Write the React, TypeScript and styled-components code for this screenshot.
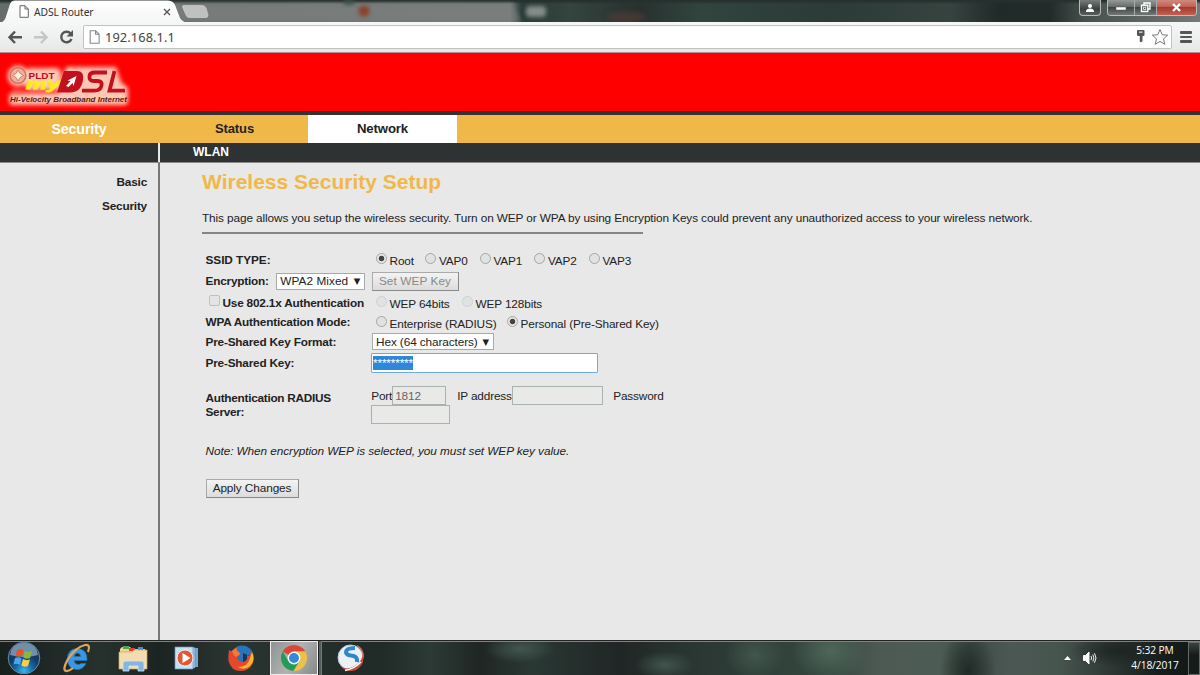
import React from "react";
import styled, { createGlobalStyle } from "styled-components";

const App = () => {
    return <Screen>
        <GlobalStyle/>
        <TabStrip>
            <TabShapes/>
            <TabTitle>
                <PageIcon size={12} color={"#666"}/>
                <span>ADSL Router</span>
                <CloseMark/>
            </TabTitle>
            <WindowButtons>
                <UserButton>
                    <svg width="10" height="10" viewBox="0 0 10 10"><circle cx="5" cy="3" r="2" fill="#fff"/><path d="M1 9V7.5Q2 5.6 5 5.6T9 7.5V9Z" fill="#fff"/></svg>
                </UserButton>
                <ButtonGroup>
                    <WinButton $w={26}><svg width="12" height="8"><rect x="1" y="3" width="10" height="3" fill="#fff" stroke="#555" strokeWidth=".5"/></svg></WinButton>
                    <WinButton $w={22}>
                        <svg width="12" height="11" fill="none" stroke="#fff" strokeWidth="1.4"><path d="M4 3V1H10V7H8"/><rect x="1.5" y="3.2" width="6.3" height="6.3"/><rect x="3.6" y="5.2" width="2.2" height="2.2" strokeWidth=".8"/></svg>
                    </WinButton>
                    <WinButton $w={40} $close>
                        <svg width="11" height="9"><path d="M2 1L9 8M9 1L2 8" stroke="#fff" strokeWidth="2.4"/></svg>
                    </WinButton>
                </ButtonGroup>
            </WindowButtons>
        </TabStrip>
        <Toolbar>
            <NavIcons/>
            <AddressBar>
                <PageIcon size={13} color={"#888"}/>
                <span>192.168.1.1</span>
                <AddressIcons/>
            </AddressBar>
            <MenuIcon><i/><i/><i/></MenuIcon>
        </Toolbar>

        <Banner><Logo/></Banner>
        <MainTabs>
            <MainTab $w={158} $color="#fff" $size={14.2} $ls={-0.1}>Security</MainTab>
            <MainTab $w={153} $size={13} $ls={-0.1}>Status</MainTab>
            <MainTab $w={149} $size={13.2} $ls={-0.15} $active>Network</MainTab>
        </MainTabs>
        <SubTabs>
            <SubLeft/>
            <SubItem>WLAN</SubItem>
        </SubTabs>

        <PageBody>
            <SideMenu>
                <SideLink>Basic</SideLink>
                <SideLink>Security</SideLink>
            </SideMenu>
            <Content>
                <Heading>Wireless Security Setup</Heading>
                <Intro>This page allows you setup the wireless security. Turn on WEP or WPA by using Encryption Keys could prevent any unauthorized access to your wireless network.</Intro>
                <Rule/>
                <Form>
                    <Row $h={21}>
                        <Label $ls={-0.05}>SSID TYPE:</Label>
                        <Options>
                            <Option $w={49.5}><Radio $on/>Root</Option>
                            <Option $w={54.5}><Radio/>VAP0</Option>
                            <Option $w={54.5}><Radio/>VAP1</Option>
                            <Option $w={54.5}><Radio/>VAP2</Option>
                            <Option $w={60}><Radio/>VAP3</Option>
                        </Options>
                    </Row>
                    <Row $h={22}>
                        <Label>Encryption:<Select $w={89} $gap={7}>WPA2 Mixed<b>▼</b></Select></Label>
                        <Button $w={87} $disabled>Set WEP Key</Button>
                    </Row>
                    <Row $h={21}>
                        <Label $check><Checkbox/>Use 802.1x Authentication</Label>
                        <Options>
                            <Option $w={86}><Radio $faded/>WEP 64bits</Option>
                            <Option $w={90}><Radio $faded/>WEP 128bits</Option>
                        </Options>
                    </Row>
                    <Row $h={18}>
                        <Label>WPA Authentication Mode:</Label>
                        <Options $down>
                            <Option $w={131}><Radio/>Enterprise (RADIUS)</Option>
                            <Option $w={160}><Radio $on/>Personal (Pre-Shared Key)</Option>
                        </Options>
                    </Row>
                    <Row $h={21}>
                        <Label>Pre-Shared Key Format:</Label>
                        <Select $w={122}>Hex (64 characters)<b>▼</b></Select>
                    </Row>
                    <Row $h={22}>
                        <Label>Pre-Shared Key:</Label>
                        <KeyInput><span>*********</span></KeyInput>
                    </Row>
                    <RadiusRow>
                        <RadiusLabel>Authentication RADIUS<br/>Server:</RadiusLabel>
                        <RadiusFields>
                            <FieldLine>
                                <FieldText $w={21}>Port</FieldText>
                                <Field $w={54}>1812</Field>
                                <FieldText $w={66} $indent={11}>IP address</FieldText>
                                <Field $w={91}/>
                                <FieldText $w={61} $indent={10}>Password</FieldText>
                            </FieldLine>
                            <Field $w={79}/>
                        </RadiusFields>
                    </RadiusRow>
                    <Note>Note: When encryption WEP is selected, you must set WEP key value.</Note>
                    <Button $w={93}>Apply Changes</Button>
                </Form>
            </Content>
        </PageBody>

        <Taskbar>
            <TaskSlot $w={48}><StartOrb/></TaskSlot>
            <TaskSlot $w={58}><ExplorerE/></TaskSlot>
            <TaskSlot $w={54}><Folder/></TaskSlot>
            <TaskSlot $w={52}><MediaPlayer/></TaskSlot>
            <TaskSlot $w={58}><Firefox/></TaskSlot>
            <ActiveSlot><ChromeLogo/></ActiveSlot>
            <StackEdge/>
            <TaskSlot $w={57}><Swirl/></TaskSlot>
            <Tray>
                <svg width="7" height="4"><path d="M0 4L3.5 0L7 4Z" fill="#fff"/></svg>
                <Speaker/>
                <Clock><span>5:32 PM</span><span>4/18/2017</span></Clock>
                <ShowDesktop/>
            </Tray>
        </Taskbar>
    </Screen>
}

export default App;

const PageIcon = ({size, color}: { size: number, color: string }) =>
    <svg width={size} height={size + 1} viewBox="0 0 12 13" fill="#fff" stroke={color} strokeWidth="1">
        <path d="M2 .7H7L10.3 4V12.3H2Z"/><path d="M7 .7V4H10.3" fill="none"/>
    </svg>

const CloseMark = () =>
    <svg width="8" height="8" viewBox="0 0 8 8"><path d="M1 1L7 7M7 1L1 7" stroke="#555" strokeWidth="1.3"/></svg>

const TabShapes = () =>
    <StripArt width="720" height="22" viewBox="0 0 720 22">
        <defs>
            <filter id="soft" x="-30%" y="-50%" width="160%" height="200%"><feGaussianBlur stdDeviation="2"/></filter>
            <linearGradient id="tabFill" x2="0" y2="1"><stop stopColor="#fff"/><stop offset="1" stopColor="#f4f5f5"/></linearGradient>
        </defs>
        <path d="M170 3H513L521 22H170Z" fill="#858786" opacity=".5" filter="url(#soft)"/>
        <ellipse cx="349" cy="2" rx="6" ry="3" fill="#3c4f48" filter="url(#soft)"/>
        <circle cx="364" cy="11" r="5.500" fill="#8a4029" filter="url(#soft)"/>
        <rect x="526" y="6" width="20" height="11" rx="4" fill="#949a97" filter="url(#soft)" opacity=".85"/>
        <ellipse cx="626" cy="17" rx="20" ry="5" fill="#513a34" filter="url(#soft)" opacity=".7"/>
        <path d="M184 5.5H202Q205 5.5 206 8L208 15Q208 17.5 206 17.5H189Q187 17.5 186 15L182.500 7Q182 5.500 184 5.500Z" fill="#bfc1c0" stroke="#d6d8d7" strokeWidth=".6"/>
        <path d="M0 23Q4 22 5.500 18L10 4Q11.500 .6 15 .6H167Q173 .6 175 5L180 18Q182 22 188 23Z" fill="url(#tabFill)"/>
    </StripArt>

const NavIcons = () =>
    <svg width="83" height="31" viewBox="0 0 83 31" fill="none" strokeWidth="2.4">
        <path d="M22 15.300H10M15 9.500L9.500 15.300L15 21" stroke="#555"/>
        <path d="M34 15.300H46M41 9.500L46.500 15.300L41 21" stroke="#c4c6c6"/>
        <path d="M70.600 11.500A5.300 5.300 0 1 0 71.500 17" stroke="#555"/>
        <path d="M73 8V14.500H66.500Z" fill="#555"/>
    </svg>

const AddressIcons = () =>
    <svg width="36" height="20" viewBox="0 0 36 20">
        <path d="M2 3.500Q2 3 3 3H8.500Q9.500 3 9.500 4V8Q9.500 9 8.500 9H7.500V14L6 15.500L4.800 14.500V9H3Q2 9 2 8Z" fill="#555"/>
        <rect x="4" y="4.500" width="3.500" height="1.300" fill="#ddd"/>
        <path d="M25 2.500L27.200 7.700L32.700 8.200L28.500 11.900L29.800 17.300L25 14.400L20.200 17.300L21.500 11.900L17.300 8.200L22.800 7.700Z" fill="#fff" stroke="#777" strokeWidth="1"/>
    </svg>

const Logo = () =>
    <svg width="136" height="50" viewBox="0 0 136 50" fontFamily="Liberation Sans, sans-serif" fontWeight="700">
        <defs><filter id="glow" x="-20%" y="-30%" width="140%" height="160%"><feGaussianBlur stdDeviation="2"/></filter></defs>
        <g filter="url(#glow)" fill="#ffdcc8" opacity=".9">
            <circle cx="18" cy="14" r="10.500"/><rect x="25" y="6" width="36" height="22" rx="5"/>
            <path d="M58 33L66 5H116L121 20L128 26V37H10V31Z"/><rect x="9" y="31" width="119" height="12" rx="4"/>
        </g>
        <path d="M12 27Q18 24 26 29L24 33H13Z" fill="#f4745e" opacity=".6" filter="url(#glow)"/>
        <circle cx="18" cy="13.500" r="7.800" fill="#eeb09a" stroke="#cf7563" strokeWidth="1.600"/>
        <path d="M18 8L20 11.500L23.500 13.500L20 15.500L18 19L16 15.500L12.500 13.500L16 11.500Z" fill="#fff1df" stroke="#d45b4c" strokeWidth=".7"/>
        <text x="28.500" y="16.500" fontSize="9.500" fill="#b90e19" textLength="26" lengthAdjust="spacingAndGlyphs">PLDT</text>
        <text x="26" y="27" fontSize="15" fill="#ffed17" stroke="#ffed17" strokeWidth=".8" fontStyle="italic" textLength="34" lengthAdjust="spacingAndGlyphs">my</text>
        <path d="M64 9H77Q84.500 9 83 18Q81 30.500 70 30.500H57Z" fill="#c4101c"/>
        <path d="M66 24L70.500 19L67.500 18.500L76.500 14L73.500 24L72.500 21L68.500 25Z" fill="#fff"/>
        <g fill="none" stroke="#c4101c" strokeWidth="3.800">
            <path d="M107 10.500H95Q89.500 10.500 89.500 14.500Q89 19 94 19H97.500Q102.500 19 101.500 23.500Q100.500 28.700 94 28.700H82"/>
            <path d="M114.500 9L109.500 28.700H125"/>
        </g>
        <text x="10" y="39.500" fontSize="7.500" fill="#5b1a14" fontStyle="italic" textLength="117" lengthAdjust="spacingAndGlyphs">Hi-Velocity Broadband Internet</text>
    </svg>

const StartOrb = () =>
    <svg width="34" height="34" viewBox="0 0 34 34">
        <defs><radialGradient id="orb" cy=".9"><stop stopColor="#35b8f0"/><stop offset=".55" stopColor="#1769a8"/><stop offset="1" stopColor="#163b63"/></radialGradient></defs>
        <circle cx="17" cy="17" r="15.800" fill="url(#orb)" stroke="#668aa0" strokeWidth="1"/>
        <path d="M3 14Q5 2 17 2T31 14Q17 18 3 14Z" fill="#bdd6e7" opacity=".55"/>
        <path d="M10 9Q14 7 16.500 9.500L15 16Q12 14 8.500 15.500Z" fill="#e5532b"/>
        <path d="M17.800 10Q21 12 25 10L23 17Q19 18.500 16.300 16.500Z" fill="#86b93e"/>
        <path d="M8 17Q12 15.500 14.500 17.500L13 24Q10 22 6.500 23.500Z" fill="#49a8e6"/>
        <path d="M16 18Q19 20 23 18.500L21 25Q17 26.500 14.300 24.500Z" fill="#fbce43"/>
    </svg>

const ExplorerE = () =>
    <svg width="30" height="30" viewBox="0 0 30 30" fill="none">
        <path d="M24 20.500Q21 26.500 15 26.500Q5.500 26 5.500 16T15 5.500Q25.500 6 25 17.500H12Q13 21.500 16 21.500Q18 21.500 19 20.500ZM12 13.500H18.800Q18 10 15.500 10T12 13.500Z" fill="#3b98e0" fillRule="evenodd" stroke="#2474ba" strokeWidth=".7"/>
        <path d="M26 9Q29 1 23 2Q14 4 6 16Q0 27 4 28Q7 28.500 11 25" stroke="#e0a75a" strokeWidth="2.200"/>
    </svg>

const Folder = () =>
    <svg width="30" height="28" viewBox="0 0 30 28">
        <path d="M2 5L4 3H12L14 5H27V25H2Z" fill="#ecd497"/>
        <path d="M5 2H11V5H5Z" fill="#53a34c"/><path d="M11 4H17V7H11Z" fill="#d34735"/><path d="M20 3H25V7H20Z" fill="#498fc9"/>
        <path d="M1 8H14L16 6H29V25H1Z" fill="#f3dcae" stroke="#cda661" strokeWidth=".7"/>
        <path d="M5 27V19Q5 17 8 17H23Q26 17 26 19V27H20V22H11V27Z" fill="#86b6e0" stroke="#d1e7f5" strokeWidth=".8"/>
    </svg>

const MediaPlayer = () =>
    <svg width="25" height="24" viewBox="0 0 25 24">
        <path d="M7 2H24V21H7Z" fill="#72a9d4"/><path d="M5 1.500H21V22H5Z" fill="#a7cbe6" stroke="#4b85b8" strokeWidth=".6"/>
        <path d="M1 1H19V23H1Z" fill="#c8dfef" stroke="#5e97c4" strokeWidth=".7"/>
        <circle cx="11" cy="12" r="8" fill="#dc5a34" stroke="#fff" strokeWidth=".8"/>
        <path d="M8.500 7L16.500 12L8.500 17Z" fill="#fff"/>
    </svg>

const Firefox = () =>
    <svg width="28" height="28" viewBox="0 0 28 28">
        <circle cx="15" cy="13" r="11.500" fill="#2875bb"/><path d="M16 9L25 13Q23 22 16 21Z" fill="#183367"/>
        <path d="M2 6Q3 7 5 7Q7 4 10 4Q9 6 12 8Q14 9 13 11L10 13Q11 18 16 18Q21 17 20 11Q24 14 23 8Q28 13 26 19Q22 27 14 27Q4 27 1.500 17Q1 11 2 6Z" fill="#e6482c"/>
        <path d="M25 8Q29 16 23 22Q17 27 11 23Q21 23 23 14Z" fill="#f7b632"/>
        <path d="M5 7Q8 5 10 4Q9 7 12 8L13 10L9 13Q6 11 5 7Z" fill="#f47a33"/>
    </svg>

const ChromeLogo = () =>
    <svg width="28" height="28" viewBox="0 0 28 28">
        <path d="M14 14L2.700 7.500A13 13 0 0 1 25.300 7.500H14Z" fill="#dc4637"/>
        <path d="M2.700 7.500A13 13 0 0 0 13.500 27L19.600 17.200L14 14L8.400 17.200Z" fill="#249b58"/>
        <path d="M14 7.500H25.300A13 13 0 0 1 13.500 27L19.600 17.200Z" fill="#edc04a"/>
        <circle cx="14" cy="14" r="6.400" fill="#fff"/><circle cx="14" cy="14" r="5" fill="#348ad7"/>
    </svg>

const Swirl = () =>
    <svg width="29" height="30" viewBox="0 0 29 30" fill="none">
        <circle cx="14.500" cy="14.500" r="12.500" fill="#e9f1f4" stroke="#b7c7cf"/>
        <path d="M19 5Q10 5 10 9Q10 12 15 12.500Q22 13 21 19" stroke="#2f86c9" strokeWidth="4"/>
        <path d="M2 19Q6 27 14 25Q25 22 27 11Q29 22 20 27Q8 31 2 19Z" fill="#cf4a35"/>
        <path d="M9 27.500Q18 26 25 19" stroke="#fff" strokeWidth="1.300"/>
        <path d="M21 2.500Q28 7 27 14" stroke="#d8705c" strokeWidth="1.400"/>
    </svg>

const Speaker = () =>
    <svg width="14" height="14" viewBox="0 0 14 14" fill="none" stroke="#fff">
        <path d="M.5 4.500H2.500L6 1V13L2.500 9.500H.5Z" fill="#fff"/>
        <path d="M8 5Q9.300 7 8 9M9.800 3.500Q12 7 9.800 10.500M11.500 2.200Q14.500 7 11.500 11.800" strokeWidth=".9"/>
    </svg>

const GlobalStyle = createGlobalStyle`
  body {
    margin: 0;
    overflow: hidden;
  }
  * {
    box-sizing: border-box;
  }
`
const Screen = styled.div`
  width: 1200px;
  height: 675px;
  display: flex;
  flex-direction: column;
  background: #e8e8e8;
  color: #222;
  font: 11.8px "Liberation Sans", Arial, sans-serif;
  white-space: nowrap;
  svg {
    display: block;
    flex-shrink: 0;
  }
`
const TabStrip = styled.div`
  height: 22px;
  display: flex;
  position: relative;
  justify-content: space-between;
  background:
    linear-gradient(#26302e 0 1px, transparent 4px),
    linear-gradient(90deg, #656c6a 0, #6e7472 510px, #293c37 522px, #34443f 570px, #28312f 640px, #31443e 700px, #2c3b38 830px, #36433f 950px, #202a28 1000px, #222b29 1050px, #46504d 1085px, #757a79 1200px);
`
const StripArt = styled.svg`
  position: absolute;
  left: 0;
  top: 0;
`
const TabTitle = styled.div`
  position: relative;
  display: flex;
  align-items: center;
  width: 172px;
  padding: 1px 1px 0 18px;
  font: 10.3px "Noto Sans", sans-serif;
  letter-spacing: -.1px;
  color: #333;
  span {
    flex: 1;
    margin-left: 4px;
  }
`
const WindowButtons = styled.div`
  display: flex;
  gap: 6px;
  padding-right: 3px;
`
const UserButton = styled.div`
  width: 22px;
  height: 16px;
  display: flex;
  align-items: center;
  justify-content: center;
  border: 1px solid #b5b9b8;
  border-top: 0;
  border-radius: 0 0 4px 4px;
  background: linear-gradient(#777c7b, #3a4240 60%, #59605e);
`
const ButtonGroup = styled.div`
  display: flex;
  height: 16px;
  border: 1px solid #b9bdbc;
  border-top: 0;
  border-radius: 0 0 4px 4px;
  overflow: hidden;
`
const WinButton = styled.div<{ $w: number, $close?: boolean }>`
  width: ${p => p.$w}px;
  display: flex;
  align-items: center;
  justify-content: center;
  border-left: ${p => p.$w === 26 ? 0 : 1}px solid #aaa;
  background: ${p => p.$close ? "linear-gradient(#d08a80, #c06053 45%, #a83a2c 50%, #c06053)" : "linear-gradient(#969a99, #626967 48%, #3f4745 50%, #727876)"};
`
const Toolbar = styled.div`
  height: 31px;
  display: flex;
  align-items: center;
  background: linear-gradient(#f6f7f7, #e6e8e8);
  border-bottom: 1px solid #b58f8f;
`
const AddressBar = styled.div`
  width: 1089px;
  height: 24px;
  display: flex;
  align-items: center;
  padding: 0 0 0 4px;
  background: #fff;
  border: 1px solid #bfc2c2;
  border-radius: 2px;
  font: 12.8px "Noto Sans", sans-serif;
  letter-spacing: .1px;
  color: #444;
  span {
    flex: 1;
    margin-left: 4px;
  }
`
const MenuIcon = styled.div`
  width: 12px;
  margin-left: 8px;
  display: flex;
  flex-direction: column;
  gap: 2px;
  i {
    height: 2.4px;
    background: #555;
    border-radius: 1px;
  }
`
const Banner = styled.div`
  height: 58px;
  padding-top: 9px;
  background: #fe0000;
`
const MainTabs = styled.div`
  height: 32px;
  display: flex;
  border-top: 4px solid #333;
  background: #f0b848;
`
const MainTab = styled.div<{ $w: number, $size: number, $color?: string, $active?: boolean, $ls?: number }>`
  width: ${p => p.$w}px;
  margin-left: ${p => p.$active ? -3 : 0}px;
  line-height: 28px;
  text-align: center;
  font-size: ${p => p.$size}px;
  font-weight: bold;
  letter-spacing: ${p => p.$ls || 0}px;
  color: ${p => p.$color || "#222"};
  background: ${p => p.$active ? "#fff" : "transparent"};
`
const SubTabs = styled.div`
  height: 20px;
  display: flex;
  background: #2f3232;
  border-bottom: 1px solid #888;
`
const SubLeft = styled.div`
  width: 160px;
  border-right: 2px solid #e8e8e8;
`
const SubItem = styled.div`
  padding-left: 33px;
  line-height: 19px;
  font-size: 12px;
  font-weight: bold;
  color: #fff;
`
const PageBody = styled.div`
  height: 477px;
  display: flex;
`
const SideMenu = styled.div`
  width: 160px;
  padding: 7px 11px 0 0;
  border-right: 2px solid #777;
  text-align: right;
`
const SideLink = styled.div`
  height: 24px;
  line-height: 24px;
  letter-spacing: -.2px;
  font-weight: bold;
`
const Content = styled.div`
  padding-left: 42px;
`
const Heading = styled.div`
  margin-top: 6px;
  height: 26px;
  line-height: 26px;
  font-size: 21px;
  font-weight: bold;
  color: #f0b848;
`
const Intro = styled.div`
  margin-top: 15px;
  height: 16px;
  line-height: 16px;
  letter-spacing: -.103px;
`
const Rule = styled.div`
  width: 441px;
  height: 2px;
  margin-top: 6px;
  background: #858585;
`
const Form = styled.div`
  padding: 15px 0 0 3.5px;
`
const Row = styled.div<{ $h: number }>`
  height: ${p => p.$h}px;
  display: grid;
  grid-template-columns: 166px auto;
  align-items: center;
  justify-content: start;
`
const Label = styled.div<{ $check?: boolean, $ls?: number }>`
  display: flex;
  align-items: center;
  padding-left: ${p => p.$check ? 3 : 0}px;
  font-weight: bold;
  letter-spacing: ${p => p.$ls || -0.2}px;
`
const Options = styled.div<{ $down?: boolean }>`
  display: flex;
  padding: ${p => p.$down ? 3 : 2}px 0 0 4px;
`
const Option = styled.div<{ $w: number }>`
  width: ${p => p.$w}px;
  display: flex;
  align-items: center;
  letter-spacing: -.13px;
`
const Radio = styled.i<{ $on?: boolean, $faded?: boolean }>`
  width: 11px;
  height: 11px;
  margin: -4px 3px 0 0;
  border: 1px solid ${p => p.$faded ? "#cbd2d2" : "#a3a6a6"};
  border-radius: 50%;
  background: ${p => p.$on ? "radial-gradient(circle, #444 0 2.3px, #e8e8e8 3.2px)" : "#e1e3e3"};
`
const Checkbox = styled.i`
  width: 11px;
  height: 11px;
  margin: -4px 3px 0 0;
  border: 1px solid #bbc2c2;
  border-radius: 2px;
  background: #e3e5e5;
`
const Select = styled.div<{ $w: number, $gap?: number }>`
  width: ${p => p.$w}px;
  height: 17px;
  display: flex;
  align-items: center;
  justify-content: space-between;
  margin-left: ${p => p.$gap || 0}px;
  padding: 0 3.5px;
  border: 1px solid #aaa;
  background: #fff;
  font-weight: normal;
  letter-spacing: ${p => p.$gap ? 0.05 : -0.1}px;
  b {
    font: 8.5px "DejaVu Sans", sans-serif;
    letter-spacing: 0;
  }
`
const Button = styled.div<{ $w: number, $disabled?: boolean }>`
  width: ${p => p.$w}px;
  height: 19px;
  line-height: 17px;
  text-align: center;
  border: 1px solid #aaa;
  border-right-color: #888;
  border-bottom-color: #888;
  background: linear-gradient(#f3f3f3, #dcdcdc);
  letter-spacing: ${p => p.$disabled ? 0.08 : -0.1}px;
  color: ${p => p.$disabled ? "#888" : "#222"};
`
const KeyInput = styled.div`
  width: 227px;
  height: 20px;
  margin-left: -.5px;
  padding: 2px 1px;
  border: 1px solid #6fabd6;
  border-radius: 1px;
  background: #fff;
  span {
    display: block;
    width: 40px;
    height: 14px;
    line-height: 14px;
    letter-spacing: -.15px;
    background: #2f87dc;
    color: #fff;
  }
`
const RadiusRow = styled.div`
  display: flex;
  margin-top: 12px;
`
const RadiusLabel = styled.div`
  width: 165.7px;
  padding-top: 6px;
  line-height: 13.5px;
  font-weight: bold;
  letter-spacing: -.27px;
`
const RadiusFields = styled.div`
  display: flex;
  flex-direction: column;
`
const FieldLine = styled.div`
  display: flex;
  height: 18.5px;
  letter-spacing: -.15px;
`
const FieldText = styled.span<{ $w: number, $indent?: number }>`
  width: ${p => p.$w}px;
  padding-left: ${p => p.$indent || 0}px;
  line-height: 20px;
`
const Field = styled.div<{ $w: number }>`
  width: ${p => p.$w}px;
  height: 19px;
  padding-left: 2px;
  line-height: 18px;
  border: 1px solid #a9b1b1;
  background: #e9e9e7;
  color: #666;
`
const Note = styled.div`
  margin: 19px 0 20px;
  height: 16px;
  line-height: 16px;
  font-style: italic;
  letter-spacing: -.07px;
`
const Taskbar = styled.div`
  height: 35px;
  display: flex;
  align-items: center;
  border-top: 1px solid #222;
  box-shadow: inset 0 1px #7d8582;
  background:
    radial-gradient(ellipse 35px 14px at 520px 8px, #42564f, transparent),
    radial-gradient(ellipse 30px 14px at 665px 24px, #41544c, transparent),
    radial-gradient(ellipse 30px 25px at 755px 14px, #41564c, transparent),
    radial-gradient(ellipse 38px 30px at 830px 10px, #50665a, transparent),
    radial-gradient(ellipse 28px 40px at 968px 30px, #202926, transparent),
    radial-gradient(ellipse 50px 16px at 1120px 10px, #1e2523, transparent),
    linear-gradient(90deg, #18201e 0, #26312e 100px, #1c2422 160px, #2a3431 230px, #202a27 380px, #2c3a36 430px, #1f2624 480px, #2a3834 530px, #202625 620px, #283430 680px, #2d3b36 730px, #354840 830px, #4d5a53 880px, #4c5c54 940px, #3d4a45 970px, #4b5853 1010px, #46544e 1060px, #2e3834 1110px, #161d1b 1160px, #121716 1200px);
`
const TaskSlot = styled.div<{ $w: number }>`
  width: ${p => p.$w}px;
  display: flex;
  justify-content: center;
`
const ActiveSlot = styled.div`
  width: 48px;
  height: 34px;
  display: flex;
  align-items: center;
  justify-content: center;
  border: 1px solid #eee;
  background: linear-gradient(120deg, #8f9391, #b0b3b2 50%, #858a88);
`
const StackEdge = styled.div`
  width: 4px;
  height: 34px;
  border-left: 1px solid #222;
  border-right: 1px solid #777;
  background: #555d5a;
`
const Tray = styled.div`
  flex: 1;
  display: flex;
  align-items: center;
  justify-content: flex-end;
  gap: 12px;
`
const Clock = styled.div`
  width: 64px;
  margin-left: 14px;
  display: flex;
  flex-direction: column;
  align-items: center;
  font: 10.2px/15px "Open Sans", sans-serif;
  letter-spacing: -.1px;
  color: #fff;
`
const ShowDesktop = styled.div`
  width: 12px;
  height: 33px;
  margin-left: -11px;
  border: 1px solid #646b69;
  background: linear-gradient(#3a4240, #161b1a 40%);
`
